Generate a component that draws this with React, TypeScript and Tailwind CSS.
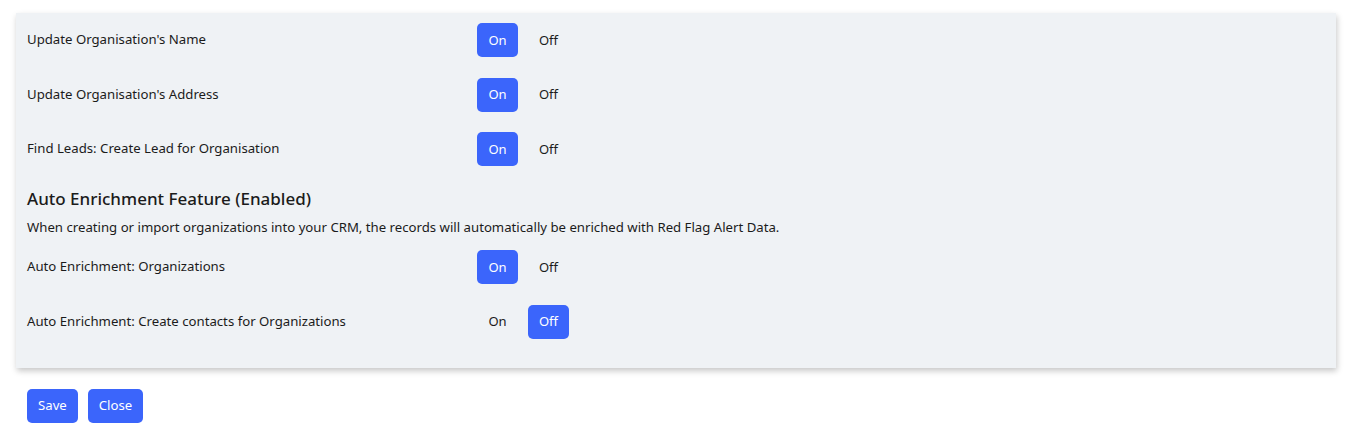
import { useState } from "react";

type Setting = { id: string; label: string; on: boolean };

const syncSettings: Setting[] = [
  { id: "name", label: "Update Organisation's Name", on: true },
  { id: "address", label: "Update Organisation's Address", on: true },
  { id: "leads", label: "Find Leads: Create Lead for Organisation", on: true },
];

const enrichSettings: Setting[] = [
  { id: "orgs", label: "Auto Enrichment: Organizations", on: true },
  { id: "contacts", label: "Auto Enrichment: Create contacts for Organizations", on: false },
];

function Toggle({ value, onChange }: { value: boolean; onChange: (v: boolean) => void }) {
  const base = "h-[34px] w-[41px] rounded-[5px] text-[13px] leading-none";
  return (
    <div className="flex items-center gap-[10px]">
      <button onClick={() => onChange(true)} className={value ? `${base} bg-[#3b65fb] text-white` : `${base} text-[#1b1b1b]`}>
        On
      </button>
      <button onClick={() => onChange(false)} className={!value ? `${base} bg-[#3b65fb] text-white` : `${base} text-[#1b1b1b]`}>
        Off
      </button>
    </div>
  );
}

function SettingRow({ setting, onChange }: { setting: Setting; onChange: (v: boolean) => void }) {
  return (
    <div className="flex items-center py-[10.25px]">
      <span className="w-[450px] text-[13.2px] text-[#1b1b1b]">{setting.label}</span>
      <Toggle value={setting.on} onChange={onChange} />
    </div>
  );
}

export default function App() {
  const [sync, setSync] = useState(syncSettings);
  const [enrich, setEnrich] = useState(enrichSettings);

  const update = (list: Setting[], id: string, on: boolean) => list.map((s) => (s.id === id ? { ...s, on } : s));

  return (
    <div className="min-h-screen bg-white pt-[13px] font-['Noto_Sans',sans-serif]">
      <div className="ml-4 mr-[18px] bg-[#eff2f5] pl-[11px] pb-[19px] shadow-[1px_3px_6px_rgba(0,0,0,0.22)]">
        {sync.map((s) => (
          <SettingRow key={s.id} setting={s} onChange={(v) => setSync(update(sync, s.id, v))} />
        ))}
        <h3 className="mt-[10px] text-[17px] font-medium leading-6 text-[#1b1b1b]">Auto Enrichment Feature (Enabled)</h3>
        <p className="mt-[6px] text-[13.2px] leading-5 text-[#1b1b1b]">
          When creating or import organizations into your CRM, the records will automatically be enriched with Red Flag Alert Data.
        </p>
        <div className="mt-[3.5px]">
          {enrich.map((s) => (
            <SettingRow key={s.id} setting={s} onChange={(v) => setEnrich(update(enrich, s.id, v))} />
          ))}
        </div>
      </div>
      <div className="mt-[21px] flex gap-[10px] pl-[27px]">
        <button className="h-[34px] rounded-[5px] bg-[#3b65fb] px-[11px] text-[13.2px] text-white">Save</button>
        <button className="h-[34px] rounded-[5px] bg-[#3b65fb] px-[11px] text-[13.2px] text-white">Close</button>
      </div>
    </div>
  );
}
